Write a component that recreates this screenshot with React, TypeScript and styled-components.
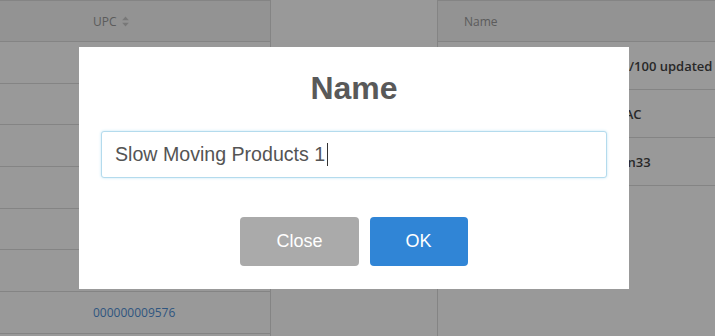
import React, { useEffect, useRef } from "react";
import styled, { createGlobalStyle } from "styled-components";

const GlobalStyle = createGlobalStyle`
  html, body { margin: 0; padding: 0; background: #ffffff; }
  body { font-family: "Open Sans", "Liberation Sans", sans-serif; overflow: hidden; }
  * { box-sizing: border-box; }
`;

const Page = styled.div`
  display: flex;
  width: 715px;
  height: 336px;
  overflow: hidden;
`;

const Table = styled.div<{ $width?: number; $side: "left" | "right" }>`
  flex: ${(p) => (p.$width ? "none" : "1")};
  width: ${(p) => (p.$width ? `${p.$width}px` : "auto")};
  border-top: 1px solid #dddddd;
  ${(p) => (p.$side === "left" ? "border-right: 1px solid #dddddd;" : "border-left: 1px solid #dddddd;")}
  display: flex;
  flex-direction: column;
  min-width: 0;
`;

const Spacer = styled.div`
  flex: none;
  width: 166px;
`;

const HeadRow = styled.div<{ $pad: number }>`
  height: 41px;
  flex: none;
  display: flex;
  align-items: center;
  gap: 5px;
  padding-left: ${(p) => p.$pad}px;
  background: #f5f5f5;
  border-bottom: 1px solid #dddddd;
  font-size: 12px;
  color: #999999;
`;

const Row = styled.div<{ $pad: number; $h: number }>`
  height: ${(p) => p.$h}px;
  flex: none;
  display: flex;
  align-items: center;
  padding-left: ${(p) => p.$pad}px;
  border-bottom: 1px solid #dddddd;
  white-space: nowrap;
  overflow: hidden;
`;

const Link = styled.a`
  font-size: 12px;
  color: #4f8fd6;
  text-decoration: none;
`;

const Strong = styled.span`
  font-size: 13px;
  font-weight: 600;
  color: #444444;
`;

const SortIcon = () => (
  <svg width="7" height="11" viewBox="0 0 7 11" aria-hidden>
    <path d="M3.5 0.5 L6.8 4.3 H0.2 Z" fill="#c8c8c8" />
    <path d="M3.5 10.5 L6.8 6.7 H0.2 Z" fill="#c8c8c8" />
  </svg>
);

const Overlay = styled.div`
  position: fixed;
  inset: 0;
  background: rgba(0, 0, 0, 0.4);
  display: flex;
  align-items: center;
  justify-content: center;
  padding-right: 7px;
`;

const Dialog = styled.div`
  width: 550px;
  height: 242px;
  background: #ffffff;
  padding: 21px 22px 24px;
  display: flex;
  flex-direction: column;
  align-items: center;
  font-family: "Liberation Sans", Arial, sans-serif;
`;

const Title = styled.h2`
  margin: 0;
  font-size: 32px;
  line-height: 40px;
  font-weight: 700;
  color: #595959;
`;

const Field = styled.div`
  position: relative;
  margin-top: 23px;
  width: 100%;
`;

const Input = styled.input`
  display: block;
  width: 100%;
  height: 47px;
  border: 1px solid #b4dbed;
  border-radius: 3px;
  box-shadow: 0 0 3px #c4e6f5;
  outline: none;
  padding: 0 13px;
  font-family: "Liberation Sans", Arial, sans-serif;
  font-size: 19.6px;
  color: #545454;
  caret-color: transparent;
  background: #ffffff;
`;

const Caret = styled.span`
  position: absolute;
  left: 226px;
  top: 12px;
  width: 1px;
  height: 23px;
  background: #333333;
  pointer-events: none;
`;

const Actions = styled.div`
  margin-top: 39px;
  display: flex;
  gap: 11px;
`;

const Button = styled.button<{ $bg: string }>`
  height: 49px;
  padding: 0 36px;
  border: none;
  border-radius: 4px;
  background: ${(p) => p.$bg};
  color: #ffffff;
  font-family: "Liberation Sans", Arial, sans-serif;
  font-size: 18px;
  cursor: pointer;
`;

const upcs = [
  "000000009512",
  "000000009528",
  "000000009534",
  "000000009541",
  "000000009553",
  "000000009569",
  "000000009576",
];

const names = [
  "Inventory Reviewing Stock/100 updated",
  "Warehouse Transfer Lots AC",
  "Seasonal Clearance Items n33",
];

export default function App() {
  const ref = useRef<HTMLInputElement>(null);
  useEffect(() => {
    const el = ref.current;
    if (el) {
      el.focus();
      const n = el.value.length;
      el.setSelectionRange(n, n);
    }
  }, []);

  return (
    <>
      <GlobalStyle />
      <Page>
        <Table $width={271} $side="left">
          <HeadRow $pad={93}>
            UPC <SortIcon />
          </HeadRow>
          {upcs.map((u) => (
            <Row key={u} $pad={93} $h={41.7}>
              <Link href="#">{u}</Link>
            </Row>
          ))}
        </Table>
        <Spacer />
        <Table $side="right">
          <HeadRow $pad={26}>Name</HeadRow>
          {names.map((n) => (
            <Row key={n} $pad={26} $h={48}>
              <Strong>{n}</Strong>
            </Row>
          ))}
        </Table>
      </Page>
      <Overlay>
        <Dialog role="dialog">
          <Title>Name</Title>
          <Field>
            <Input ref={ref} defaultValue="Slow Moving Products 1" />
            <Caret />
          </Field>
          <Actions>
            <Button $bg="#aaaaaa">Close</Button>
            <Button $bg="#3085d6">OK</Button>
          </Actions>
        </Dialog>
      </Overlay>
    </>
  );
}
